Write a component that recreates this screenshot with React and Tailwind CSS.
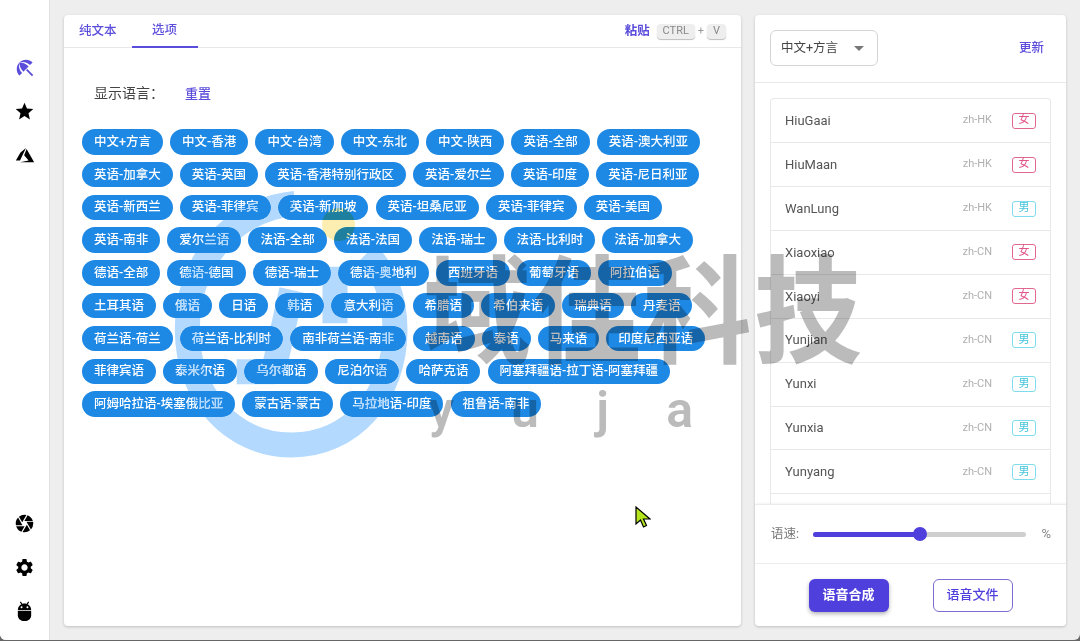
import { MdBeachAccess, MdStar, MdCamera, MdSettings } from 'react-icons/md'

const langs = [
  '中文+方言', '中文-香港', '中文-台湾', '中文-东北', '中文-陕西', '英语-全部', '英语-澳大利亚',
  '英语-加拿大', '英语-英国', '英语-香港特别行政区', '英语-爱尔兰', '英语-印度', '英语-尼日利亚',
  '英语-新西兰', '英语-菲律宾', '英语-新加坡', '英语-坦桑尼亚', '英语-菲律宾', '英语-美国',
  '英语-南非', '爱尔兰语', '法语-全部', '法语-法国', '法语-瑞士', '法语-比利时', '法语-加拿大',
  '德语-全部', '德语-德国', '德语-瑞士', '德语-奥地利', '西班牙语', '葡萄牙语', '阿拉伯语',
  '土耳其语', '俄语', '日语', '韩语', '意大利语', '希腊语', '希伯来语', '瑞典语', '丹麦语',
  '荷兰语-荷兰', '荷兰语-比利时', '南非荷兰语-南非', '越南语', '泰语', '马来语', '印度尼西亚语',
  '菲律宾语', '泰米尔语', '乌尔都语', '尼泊尔语', '哈萨克语', '阿塞拜疆语-拉丁语-阿塞拜疆',
  '阿姆哈拉语-埃塞俄比亚', '蒙古语-蒙古', '马拉地语-印度', '祖鲁语-南非',
]

const voices = [
  ['HiuGaai', 'zh-HK', '女'],
  ['HiuMaan', 'zh-HK', '女'],
  ['WanLung', 'zh-HK', '男'],
  ['Xiaoxiao', 'zh-CN', '女'],
  ['Xiaoyi', 'zh-CN', '女'],
  ['Yunjian', 'zh-CN', '男'],
  ['Yunxi', 'zh-CN', '男'],
  ['Yunxia', 'zh-CN', '男'],
  ['Yunyang', 'zh-CN', '男'],
]

function AzureIcon() {
  return (
    <svg viewBox="0 0 24 24" className="h-[22px] w-[22px]" fill="#000">
      <path d="M13.05 4.24 6.56 18.05 2 18l5.09-8.76 5.96-5zM13.75 5.33 21.97 19.78H6.66l9.27-1.65-4.86-5.78 2.68-7.02z" />
    </svg>
  )
}

function AndroidIcon() {
  return (
    <svg viewBox="0 0 20 24" className="h-[20px] w-[17px]" fill="#000">
      <path d="M5 1l2 3M15 1l-2 3" stroke="#000" strokeWidth="1.4" fill="none" />
      <path d="M2 11C2 6 6 3 10 3s8 3 8 8H2z" />
      <path d="M2 12h16v5c0 4-3 7-8 7s-8-3-8-7v-5z" />
      <circle cx="6.5" cy="7.5" r="1.2" fill="#fff" />
      <circle cx="13.5" cy="7.5" r="1.2" fill="#fff" />
    </svg>
  )
}

function Sidebar() {
  return (
    <div className="flex h-full w-[49px] shrink-0 flex-col items-center justify-between bg-white pt-[57px] pb-[19px] shadow-[1px_0_0_#e2e2e2]">
      <div className="flex flex-col items-center gap-[22px]">
        <MdBeachAccess className="h-[22px] w-[22px] text-[#5b4ddb]" />
        <MdStar className="h-[21px] w-[21px] text-black" />
        <AzureIcon />
      </div>
      <div className="flex flex-col items-center gap-[23px]">
        <MdCamera className="h-[21px] w-[21px] text-black" />
        <MdSettings className="h-[21px] w-[21px] text-black" />
        <AndroidIcon />
      </div>
    </div>
  )
}

function Key({ children, className }) {
  return (
    <span className={`flex h-[15px] items-center justify-center rounded-[4px] bg-[#eeeeee] text-[11px] text-[#888888] shadow-[0_1px_1px_#bdbdbd] ${className}`}>
      {children}
    </span>
  )
}

function MainCard() {
  return (
    <div className="flex h-full w-[677px] flex-col rounded-[4px] bg-white shadow-[0_1px_3px_rgba(0,0,0,0.2)]">
      <div className="flex h-[33px] shrink-0 items-center justify-between border-b border-[#e8e8e8] pr-[15px]">
        <div className="flex h-full items-center text-[12.5px] font-medium text-[#5b4ddb]">
          <span className="pl-[15px] pr-[15px]">纯文本</span>
          <span className="flex h-[33px] w-[66px] items-center justify-center border-b-2 border-[#5b4ddb]">选项</span>
        </div>
        <div className="flex items-center">
          <span className="mr-[7px] text-[12.5px] font-bold text-[#5b4ddb]">粘贴</span>
          <Key className="w-[38px]">CTRL</Key>
          <span className="mx-[3px] text-[11px] text-[#999999]">+</span>
          <Key className="w-[19px]">V</Key>
        </div>
      </div>
      <div className="flex items-center pt-[35px] pl-[30px]">
        <span className="w-[91px] text-[14px] text-[#444444]">显示语言：</span>
        <span className="text-[13px] font-medium text-[#5b4ddb]">重置</span>
      </div>
      <div className="flex w-[662px] flex-wrap gap-x-[7.1px] gap-y-[7.3px] pt-[25px] pl-[18px]">
        {langs.map((lang, i) => (
          <span
            key={i}
            className="flex h-[25.5px] items-center rounded-full bg-[#1e88e5] px-[12px] pt-[1px] text-[12.5px] font-medium text-white"
          >
            {lang}
          </span>
        ))}
      </div>
    </div>
  )
}

function VoiceRow({ name, locale, gender }) {
  const female = gender === '女'
  return (
    <div className="flex h-[43.9px] shrink-0 items-center border-b border-[#e8e8e8] pr-[14px] pl-[14px]">
      <span className="flex-1 text-[13px] text-[#555555]">{name}</span>
      <span className="mr-[20px] text-[11px] text-[#b0b0b0]">{locale}</span>
      <span
        className={
          female
            ? 'flex h-[16px] w-[24px] items-center justify-center rounded-[3px] border border-[#e0688f] text-[11px] text-[#e0558a]'
            : 'flex h-[16px] w-[24px] items-center justify-center rounded-[3px] border border-[#7fdcee] text-[11px] text-[#45c4dc]'
        }
      >
        {gender}
      </span>
    </div>
  )
}

function SideCard() {
  return (
    <div className="flex h-full w-[311px] flex-col rounded-[4px] bg-white shadow-[0_1px_3px_rgba(0,0,0,0.2)]">
      <div className="flex h-[68px] shrink-0 items-center justify-between border-b border-[#e8e8e8] pr-[22px] pb-[1px] pl-[15px]">
        <div className="flex h-[36px] w-[108px] items-center rounded-[6px] border border-[#d5d5d5] pl-[10px]">
          <span className="text-[12.5px] text-[#444444]">中文+方言</span>
          <span className="ml-[16px] h-0 w-0 border-x-[5px] border-t-[5px] border-x-transparent border-t-[#777777]" />
        </div>
        <span className="text-[12.5px] font-medium text-[#5b4ddb]">更新</span>
      </div>
      <div className="min-h-0 flex-1 overflow-hidden px-[15px] pt-[15.3px]">
        <div className="h-[460px] rounded-t-[4px] border-x border-t border-[#e8e8e8]">
          {voices.map(([name, locale, gender]) => (
            <VoiceRow key={name} name={name} locale={locale} gender={gender} />
          ))}
        </div>
      </div>
      <div className="flex h-[60px] shrink-0 items-center border-y border-[#ececec] pr-[15px] pl-[16px] shadow-[0_-1px_2px_rgba(0,0,0,0.05)]">
        <span className="w-[42px] text-[12.5px] text-[#777777]">语速:</span>
        <div className="flex h-[5px] w-[214px] items-center rounded-full bg-[#cfcfcf]">
          <div className="h-[5px] w-[107px] rounded-full bg-[#4f3fdc]" />
          <div className="-ml-[7px] h-[14px] w-[14px] rounded-full bg-[#4f3fdc]" />
        </div>
        <span className="ml-[15px] text-[13px] text-[#888888]">%</span>
      </div>
      <div className="flex h-[62px] shrink-0 items-center justify-center gap-[44px]">
        <button className="h-[33px] w-[80px] rounded-[6px] bg-[#4f3fdc] text-[13px] font-bold text-white shadow-[0_2px_4px_rgba(0,0,0,0.3)]">
          语音合成
        </button>
        <button className="h-[33px] w-[80px] rounded-[6px] border border-[#7a6fd0] bg-white text-[13px] font-medium text-[#4f3fdc]">
          语音文件
        </button>
      </div>
    </div>
  )
}

function Watermark() {
  return (
    <>
      <svg
        viewBox="0 0 780 840"
        className="pointer-events-none absolute top-[190px] left-[170px] h-[280px] w-[260px] mix-blend-darken"
        fill="none"
        stroke="#b3dafe"
        strokeWidth="75"
      >
        <path d="M375 40C180 60 52 220 52 420c0 200 138 345 313 345s310-145 310-345c0-100-35-180-85-230" />
        <path d="M200 545h110L365 300" strokeLinejoin="round" />
        <path d="M495 230V400" />
      </svg>
      <div className="pointer-events-none absolute top-[229px] left-[423px] flex h-[170px] w-[439px] scale-y-[1.08] items-start justify-between text-[108px] leading-[170px] font-bold text-[#bbbbbb] mix-blend-multiply">
        <span>域</span>
        <span>佳</span>
        <span>科</span>
        <span>技</span>
      </div>
      <div className="pointer-events-none absolute top-[380px] left-[429px] flex w-[264px] justify-between text-[50px] leading-[60px] font-semibold text-[#bbbbbb] mix-blend-multiply">
        <span>y</span>
        <span>u</span>
        <span>j</span>
        <span>a</span>
      </div>
      <div className="pointer-events-none absolute top-[208px] left-[322px] h-[33px] w-[33px] rounded-full bg-[#fbeeb0] mix-blend-multiply" />
      <svg viewBox="0 0 16 22" className="pointer-events-none absolute top-[506px] left-[635px] h-[22px] w-[16px]">
        <path d="M1 1v17l4.5-4 3 7 3-1.5-3-6.5H15z" fill="#b5e61d" stroke="#000" strokeWidth="1.2" />
      </svg>
    </>
  )
}

export default function App() {
  return (
    <div className="relative h-[641px] w-[1080px] overflow-hidden bg-[#666666] [font-family:Roboto,'Noto_Sans_CJK_SC',sans-serif]">
      <div className="flex h-[640px] overflow-hidden rounded-b-[6px] bg-[#eeeeee]">
        <Sidebar />
        <div className="flex h-full gap-[14px] pt-[15px] pb-[14px] pl-[15px]">
          <MainCard />
          <SideCard />
        </div>
      </div>
      <Watermark />
    </div>
  )
}
